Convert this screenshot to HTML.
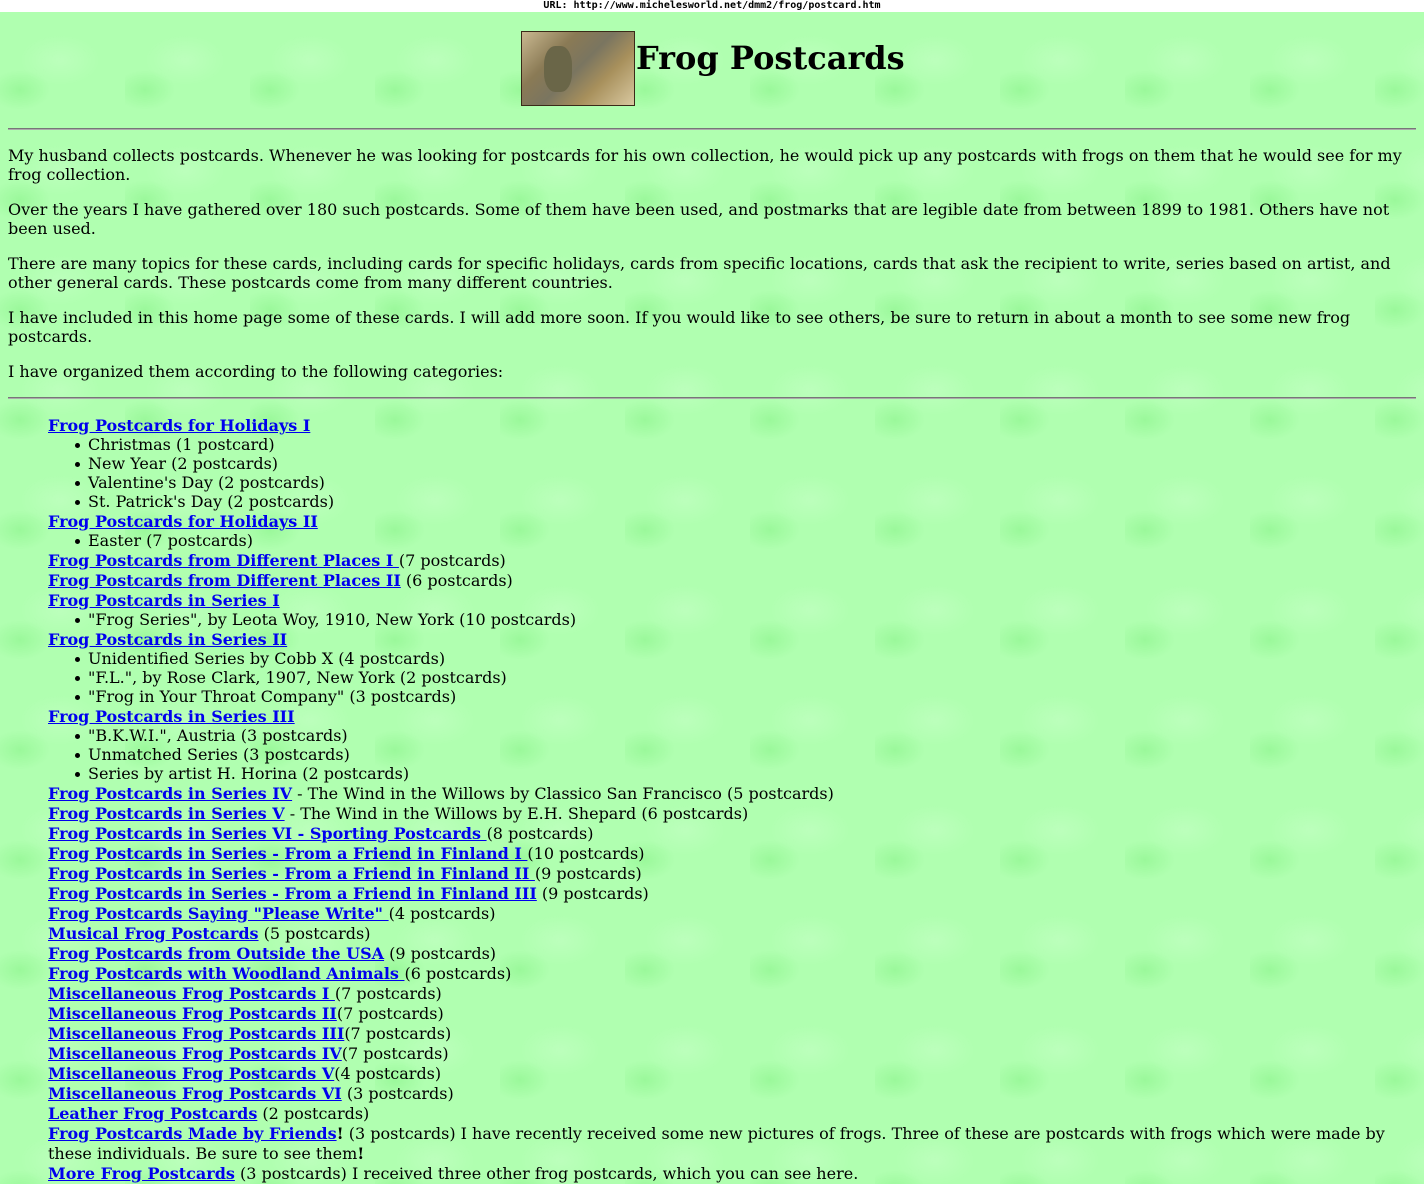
<!DOCTYPE html>
<html><head><meta charset="utf-8">
<style>
html,body{margin:0;padding:0}
body{width:1424px;height:1179px;overflow:hidden;position:relative;background:#b0ffb0;font-family:"DejaVu Serif","Liberation Serif",serif;font-size:16px;color:#000;
background-image:radial-gradient(ellipse 40px 25px at 60px 60px,rgba(255,255,255,0.15),transparent),radial-gradient(ellipse 30px 20px at 20px 90px,rgba(0,200,0,0.12),transparent);background-size:125px 110px}
.url{position:absolute;left:0;top:0;width:1424px;height:12px;background:#fff;text-align:center;font:bold 10px "DejaVu Sans Mono","Liberation Mono",monospace;line-height:12px}
.img{position:absolute;left:521px;top:31px;width:114px;height:75px;box-sizing:border-box;border:1px solid #3a2a18;background:linear-gradient(135deg,#c9b890 0%,#8a7a55 30%,#7a7560 50%,#a8905c 70%,#d8c8a0 100%)}
.img:before{content:"";position:absolute;left:22px;top:14px;width:28px;height:46px;border-radius:40%;background:#6a6648}
h1{position:absolute;left:636px;top:39px;margin:0;font-size:32px;font-weight:bold;line-height:38px}
hr{position:absolute;left:8px;width:1408px;margin:0;border:0;border-top:1px solid #777;border-bottom:1px solid #aaa;height:0}
p{position:absolute;left:8px;width:1400px;margin:0;line-height:19px}
a{color:#0000ee;font-weight:bold;text-decoration:underline}
.list{position:absolute;left:48px;top:416px;width:1360px}
.l{line-height:20px;height:20px}
.b{line-height:19px;height:19px;padding-left:40px;position:relative}
.b:before{content:"";position:absolute;left:27px;top:8px;width:5px;height:5px;border-radius:50%;background:#000}
</style></head><body>
<div class="url">URL: http://www.michelesworld.net/dmm2/frog/postcard.htm</div>
<div class="img"></div>
<h1>Frog Postcards</h1>
<hr style="top:128px">
<p style="top:146px">My husband collects postcards. Whenever he was looking for postcards for his own collection, he would pick up any postcards with frogs on them that he would see for my frog collection.</p>
<p style="top:200px">Over the years I have gathered over 180 such postcards. Some of them have been used, and postmarks that are legible date from between 1899 to 1981. Others have not been used.</p>
<p style="top:254px">There are many topics for these cards, including cards for specific holidays, cards from specific locations, cards that ask the recipient to write, series based on artist, and other general cards. These postcards come from many different countries.</p>
<p style="top:308px">I have included in this home page some of these cards. I will add more soon. If you would like to see others, be sure to return in about a month to see some new frog postcards.</p>
<p style="top:362px">I have organized them according to the following categories:</p>
<hr style="top:397px">
<div class="list">
<div class="l" style="height:19px"><a>Frog Postcards for Holidays I</a></div>
<div class="b">Christmas (1 postcard)</div>
<div class="b">New Year (2 postcards)</div>
<div class="b">Valentine's Day (2 postcards)</div>
<div class="b" style="height:20px">St. Patrick's Day (2 postcards)</div>
<div class="l" style="height:19px"><a>Frog Postcards for Holidays II</a></div>
<div class="b" style="height:20px">Easter (7 postcards)</div>
<div class="l"><a>Frog Postcards from Different Places I </a>(7 postcards)</div>
<div class="l"><a>Frog Postcards from Different Places II</a> (6 postcards)</div>
<div class="l" style="height:19px"><a>Frog Postcards in Series I</a></div>
<div class="b" style="height:20px">"Frog Series", by Leota Woy, 1910, New York (10 postcards)</div>
<div class="l" style="height:19px"><a>Frog Postcards in Series II</a></div>
<div class="b">Unidentified Series by Cobb X (4 postcards)</div>
<div class="b">"F.L.", by Rose Clark, 1907, New York (2 postcards)</div>
<div class="b" style="height:20px">"Frog in Your Throat Company" (3 postcards)</div>
<div class="l" style="height:19px"><a>Frog Postcards in Series III</a></div>
<div class="b">"B.K.W.I.", Austria (3 postcards)</div>
<div class="b">Unmatched Series (3 postcards)</div>
<div class="b" style="height:20px">Series by artist H. Horina (2 postcards)</div>
<div class="l"><a>Frog Postcards in Series IV</a> - The Wind in the Willows by Classico San Francisco (5 postcards)</div>
<div class="l"><a>Frog Postcards in Series V</a> - The Wind in the Willows by E.H. Shepard (6 postcards)</div>
<div class="l"><a>Frog Postcards in Series VI - Sporting Postcards </a>(8 postcards)</div>
<div class="l"><a>Frog Postcards in Series - From a Friend in Finland I </a>(10 postcards)</div>
<div class="l"><a>Frog Postcards in Series - From a Friend in Finland II </a>(9 postcards)</div>
<div class="l"><a>Frog Postcards in Series - From a Friend in Finland III</a> (9 postcards)</div>
<div class="l"><a>Frog Postcards Saying "Please Write" </a>(4 postcards)</div>
<div class="l"><a>Musical Frog Postcards</a> (5 postcards)</div>
<div class="l"><a>Frog Postcards from Outside the USA</a> (9 postcards)</div>
<div class="l"><a>Frog Postcards with Woodland Animals </a>(6 postcards)</div>
<div class="l"><a>Miscellaneous Frog Postcards I </a>(7 postcards)</div>
<div class="l"><a>Miscellaneous Frog Postcards II</a>(7 postcards)</div>
<div class="l"><a>Miscellaneous Frog Postcards III</a>(7 postcards)</div>
<div class="l"><a>Miscellaneous Frog Postcards IV</a>(7 postcards)</div>
<div class="l"><a>Miscellaneous Frog Postcards V</a>(4 postcards)</div>
<div class="l"><a>Miscellaneous Frog Postcards VI</a> (3 postcards)</div>
<div class="l"><a>Leather Frog Postcards</a> (2 postcards)</div>
<div class="l" style="height:40px"><a>Frog Postcards Made by Friends</a><b>!</b> (3 postcards) I have recently received some new pictures of frogs. Three of these are postcards with frogs which were made by these individuals. Be sure to see them<b>!</b></div>
<div class="l"><a>More Frog Postcards</a> (3 postcards) I received three other frog postcards, which you can see here.</div>
</div>
</body></html>
